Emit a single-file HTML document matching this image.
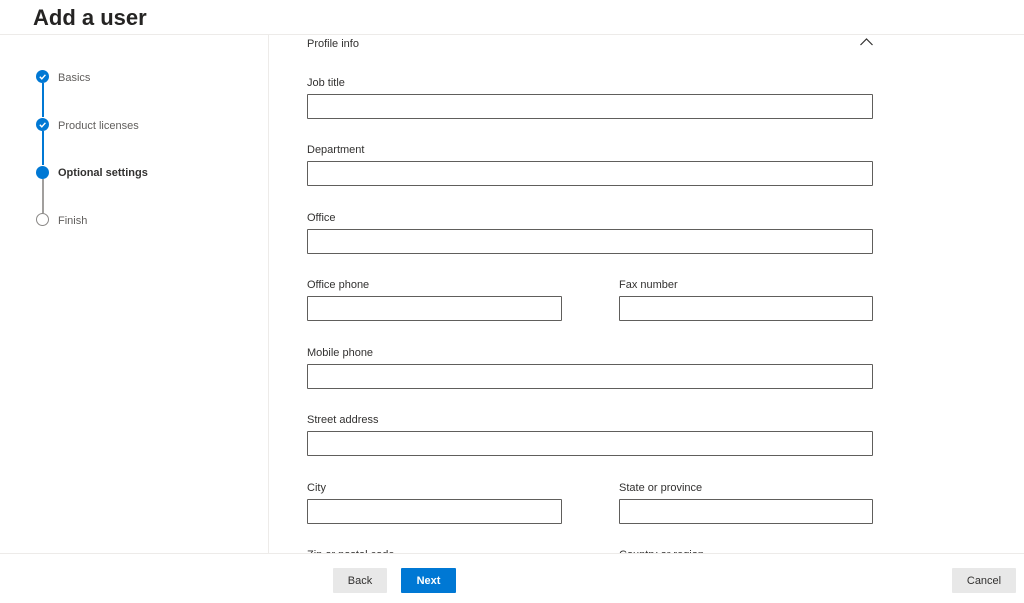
<!DOCTYPE html>
<html><head><style>
*{margin:0;padding:0;box-sizing:border-box}
body{width:1024px;height:603px;overflow:hidden;background:#fff;font-family:"Liberation Sans",sans-serif;color:#323130;position:relative}
.t{position:absolute;left:33px;top:5px;font-size:22px;font-weight:bold;color:#252423}
.hl{position:absolute;left:0;top:34px;width:1024px;height:1px;background:#edebe9}
.vl{position:absolute;left:268px;top:35px;width:1px;height:518px;background:#edebe9}
.c{position:absolute;left:36px;width:13px;height:13px;border-radius:50%;background:#0078d4}
.sl{position:absolute;left:41.5px;width:2px;height:34px}
.st{position:absolute;left:58px;font-size:11px;color:#605e5c}
.lb{position:absolute;font-size:11px;color:#323130}
.in{position:absolute;height:25px;border:1px solid #605e5c;border-radius:1px}
.ft{position:absolute;left:0;top:553px;width:1024px;height:50px;background:#fff;border-top:1px solid #edebe9}
.b{position:absolute;top:568px;height:25px;font-size:11px;text-align:center;line-height:27px;border-radius:1px}
</style></head><body>
<div class="t">Add a user</div>
<div class="hl"></div><div class="vl"></div>
<div class="sl" style="top:83px;background:#0078d4"></div>
<div class="sl" style="top:131px;background:#0078d4"></div>
<div class="sl" style="top:179px;background:#a19f9d"></div>
<div class="c" style="top:70px"><svg width="13" height="13"><path d="M3.8 6.8l2 2 3.6-4" stroke="#fff" stroke-width="1.4" fill="none"/></svg></div>
<div class="c" style="top:118px"><svg width="13" height="13"><path d="M3.8 6.8l2 2 3.6-4" stroke="#fff" stroke-width="1.4" fill="none"/></svg></div>
<div class="c" style="top:166px"></div>
<div class="c" style="top:213px;background:#fff;border:1.5px solid #8a8886"></div>
<div class="st" style="top:72px">Basics</div>
<div class="st" style="top:120px">Product licenses</div>
<div class="st" style="top:167px;font-weight:bold;color:#323130">Optional settings</div>
<div class="st" style="top:215px">Finish</div>
<div class="lb" style="left:307px;top:38px">Profile info</div>
<svg style="position:absolute;left:859px;top:37px" width="16" height="10"><path d="M1.5 8l6-6 6 6" stroke="#323130" stroke-width="1.2" fill="none"/></svg>
<div class="lb" style="left:307px;top:77px">Job title</div><div class="in" style="left:307px;top:94px;width:566px"></div>
<div class="lb" style="left:307px;top:144px">Department</div><div class="in" style="left:307px;top:161px;width:566px"></div>
<div class="lb" style="left:307px;top:212px">Office</div><div class="in" style="left:307px;top:229px;width:566px"></div>
<div class="lb" style="left:307px;top:279px">Office phone</div><div class="in" style="left:307px;top:296px;width:255px"></div>
<div class="lb" style="left:619px;top:279px">Fax number</div><div class="in" style="left:619px;top:296px;width:254px"></div>
<div class="lb" style="left:307px;top:347px">Mobile phone</div><div class="in" style="left:307px;top:364px;width:566px"></div>
<div class="lb" style="left:307px;top:414px">Street address</div><div class="in" style="left:307px;top:431px;width:566px"></div>
<div class="lb" style="left:307px;top:482px">City</div><div class="in" style="left:307px;top:499px;width:255px"></div>
<div class="lb" style="left:619px;top:482px">State or province</div><div class="in" style="left:619px;top:499px;width:254px"></div>
<div class="lb" style="left:307px;top:549px">Zip or postal code</div>
<div class="lb" style="left:619px;top:549px">Country or region</div>
<div class="ft"></div>
<div class="b" style="left:333px;width:54px;background:#e8e8e8;color:#323130">Back</div>
<div class="b" style="left:401px;width:55px;background:#0078d4;color:#fff;font-weight:bold">Next</div>
<div class="b" style="left:952px;width:64px;background:#e8e8e8;color:#323130">Cancel</div>
</body></html>
